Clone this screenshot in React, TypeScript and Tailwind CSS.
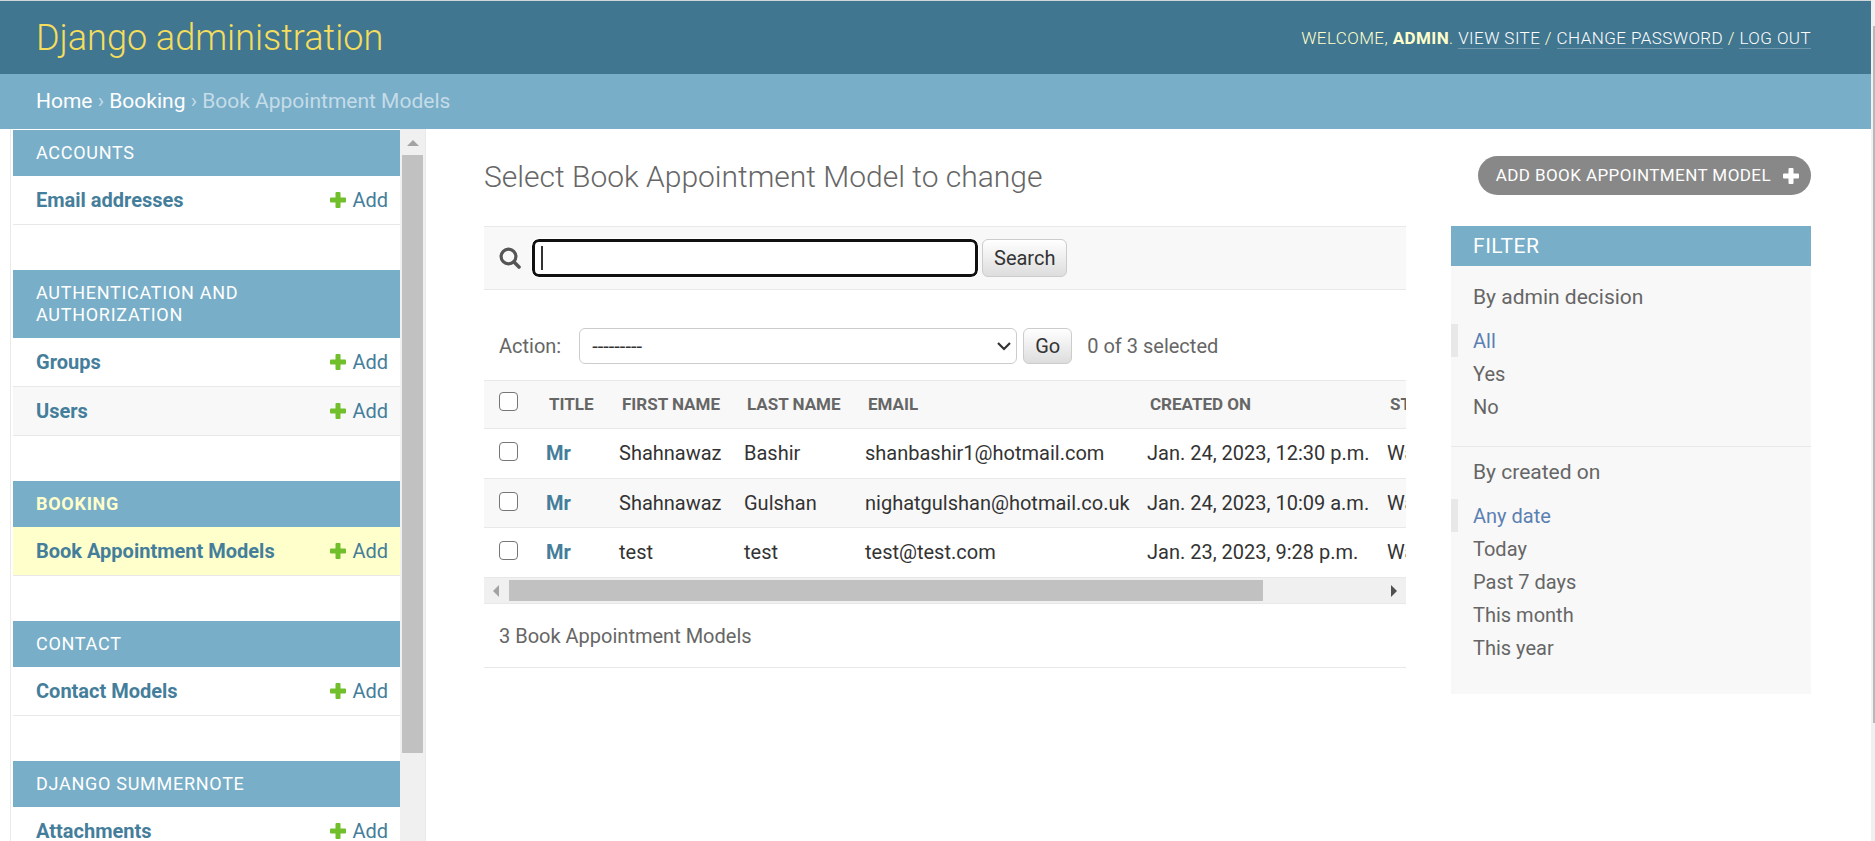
import React from "react";

type Section = { name: string; models: string[]; current?: boolean };

const sections: Section[] = [
  { name: "Accounts", models: ["Email addresses"] },
  { name: "Authentication and Authorization", models: ["Groups", "Users"] },
  { name: "Booking", models: ["Book Appointment Models"], current: true },
  { name: "Contact", models: ["Contact Models"] },
  { name: "Django Summernote", models: ["Attachments"] },
];

const columns = ["Title", "First name", "Last name", "Email", "Created on", "Status"];

const rows = [
  ["Mr", "Shahnawaz", "Bashir", "shanbashir1@hotmail.com", "Jan. 24, 2023, 12:30 p.m.", "Waiting"],
  ["Mr", "Shahnawaz", "Gulshan", "nighatgulshan@hotmail.co.uk", "Jan. 24, 2023, 10:09 a.m.", "Waiting"],
  ["Mr", "test", "test", "test@test.com", "Jan. 23, 2023, 9:28 p.m.", "Waiting"],
];

const filters = [
  { title: "By admin decision", options: ["All", "Yes", "No"] },
  { title: "By created on", options: ["Any date", "Today", "Past 7 days", "This month", "This year"] },
];

function Plus({ className }: { className: string }) {
  return (
    <svg viewBox="0 0 16 16" className={className} fill="currentColor" aria-hidden="true">
      <path d="M6.500 0h3q1 0 1 1v4.500H15q1 0 1 1v3q0 1-1 1h-4.500V15q0 1-1 1h-3q-1 0-1-1v-4.500H1q-1 0-1-1v-3q0-1 1-1h4.500V1q0-1 1-1z" />
    </svg>
  );
}

function Check({ label }: { label: string }) {
  return (
    <input
      type="checkbox"
      aria-label={label}
      className="block size-[19px] appearance-none rounded-[4px] border border-[#767676] bg-white"
    />
  );
}

function Sidebar() {
  return (
    <nav aria-label="Applications" className="ml-2.5 flex w-[416px] shrink-0 overflow-hidden border-x border-[#eaeaea]">
      <div className="h-0 min-h-full min-w-0 flex-1 pt-px pl-0.5">
        {sections.map((s) => (
          <section key={s.name} className="mb-[45px]">
            <h2 className="bg-[#79aec8] py-3 pr-20 pl-[23px] text-[18px] leading-[22px] tracking-[0.04em] uppercase">
              <a href="#" className={s.current ? "font-bold text-[#ffc]" : "text-white"}>
                {s.name}
              </a>
            </h2>
            {s.models.map((m, i) => (
              <div
                key={m}
                className={`flex h-[49px] items-center justify-between border-b border-[#e8e8e8] pr-3 pl-[23px] text-[20px] text-[#447e9b] ${
                  s.current ? "bg-[#ffc]" : i % 2 ? "bg-[#f8f8f8]" : "bg-white"
                }`}
              >
                <a href="#" className="font-bold">
                  {m}
                </a>
                <a href="#" className="flex items-center gap-1.5">
                  <Plus className="size-4 text-[#70bf2b]" />
                  Add
                </a>
              </div>
            ))}
          </section>
        ))}
      </div>
      <div className="flex w-[25px] shrink-0 flex-col items-center bg-[#f0f0f0]" aria-hidden="true">
        <svg viewBox="0 0 12 6" className="mt-[11px] mb-[9px] h-1.5 w-3 shrink-0" fill="#a3a3a3">
          <path d="M6 0l6 6H0z" />
        </svg>
        <div className="h-[598px] w-[21px] bg-[#c1c1c1]" />
      </div>
    </nav>
  );
}

function ResultTable() {
  return (
    <div>
      <div className="overflow-hidden">
        <table className="w-[1066px] table-fixed border-collapse text-left text-[20px] text-[#333]">
          <colgroup>
            <col className="w-[50px]" />
            <col className="w-[73px]" />
            <col className="w-[125px]" />
            <col className="w-[121px]" />
            <col className="w-[282px]" />
            <col className="w-[240px]" />
            <col />
          </colgroup>
          <thead>
            <tr className="h-12 border-y border-[#e8e8e8] bg-[#f8f8f8] text-[17px] text-[#666] uppercase">
              <th className="pb-1.5 pl-[15px]">
                <Check label="Select all" />
              </th>
              {columns.map((c) => (
                <th key={c} className="pl-[15px] font-bold whitespace-nowrap">
                  {c}
                </th>
              ))}
            </tr>
          </thead>
          <tbody>
            {rows.map((r, i) => (
              <tr key={i} className={`border-b border-[#e8e8e8] ${i % 2 ? "h-[49px] bg-[#f8f8f8]" : "h-[50px] bg-white"}`}>
                <td className="pb-1 pl-[15px]">
                  <Check label={`Select row ${i + 1}`} />
                </td>
                {r.map((v, j) => (
                  <td key={j} className="pb-px pl-3 whitespace-nowrap">
                    {j === 0 ? (
                      <a href="#" className="font-bold text-[#447e9b]">
                        {v}
                      </a>
                    ) : (
                      v
                    )}
                  </td>
                ))}
              </tr>
            ))}
          </tbody>
        </table>
      </div>
      <div className="flex h-[25px] items-center bg-[#f0f0f0] px-[9px]" aria-hidden="true">
        <svg viewBox="0 0 6 12" className="h-3 w-1.5 shrink-0" fill="#a3a3a3">
          <path d="M6 0v12L0 6z" />
        </svg>
        <div className="mx-2.5 flex-1">
          <div className="h-[21px] w-[86.5%] bg-[#c1c1c1]" />
        </div>
        <svg viewBox="0 0 6 12" className="h-3 w-1.5 shrink-0" fill="#505050">
          <path d="M0 0v12l6-6z" />
        </svg>
      </div>
    </div>
  );
}

const buttonClass =
  "rounded-[6px] border border-[#ccc] bg-linear-to-b from-white to-[#ddd] px-[11px] text-[20px] text-[#333]";

function ChangeList() {
  return (
    <div className="min-w-0 flex-1">
      <form className="flex h-16 items-center border-y border-[#e8e8e8] bg-[#f8f8f8] pb-px pl-[15px]" onSubmit={(e) => e.preventDefault()}>
        <label htmlFor="searchbar" className="mr-[11px]">
          <svg viewBox="0 0 22 22" className="size-[22px]" fill="none" stroke="#555" role="img" aria-label="Search">
            <circle cx="9.500" cy="9.500" r="7.400" strokeWidth="3.200" />
            <path d="M15 15l5 5" strokeWidth="3.600" strokeLinecap="round" />
          </svg>
        </label>
        <div className="relative mr-1">
          <input
            id="searchbar"
            type="text"
            className="block h-[38px] w-[446px] rounded-[7px] border-[3px] border-[#101010] bg-white px-2 text-[20px] outline-1 outline-white"
          />
          <span className="absolute top-[7px] left-[9px] h-6 w-[2px] bg-[#333]" aria-hidden="true" />
        </div>
        <button className={`h-[38px] ${buttonClass}`}>Search</button>
      </form>

      <form className="mt-[38px] mb-4 flex items-center pl-[15px] text-[20px] text-[#666]" onSubmit={(e) => e.preventDefault()}>
        <label htmlFor="action" className="mr-[18px]">
          Action:
        </label>
        <div className="relative mr-1.5">
          <select
            id="action"
            className="block h-9 w-[438px] appearance-none rounded-[6px] border border-[#ccc] bg-white px-3 text-[20px] text-[#333]"
          >
            <option>---------</option>
          </select>
          <svg
            viewBox="0 0 14 9"
            className="pointer-events-none absolute top-3.5 right-1.5 h-[9px] w-3.5"
            fill="none"
            stroke="#333"
            strokeWidth="2.200"
            aria-hidden="true"
          >
            <path d="M1 1l6 6 6-6" />
          </svg>
        </div>
        <button className={`mr-[15px] h-9 ${buttonClass}`}>Go</button>
        <span>0 of 3 selected</span>
      </form>

      <ResultTable />
      <p className="flex h-[65px] items-center border-y border-[#e8e8e8] px-[15px] text-[20px] text-[#666]">
        3 Book Appointment Models
      </p>
    </div>
  );
}

function Filter() {
  return (
    <aside className="w-[360px] shrink-0 self-start bg-[#f8f8f8]">
      <h2 className="flex h-10 items-center bg-[#79aec8] pt-0.5 pl-[22px] text-[21px] tracking-wide text-white uppercase">Filter</h2>
      {filters.map((f, i) => (
        <section key={f.title} className={i === 0 ? "border-b border-[#e8e8e8] pt-[19px] pb-[23px]" : "pt-[13px] pb-[30px]"}>
          <h3 className="mb-[14px] pl-[22px] text-[21px] leading-[25px] text-[#666]">{f.title}</h3>
          <ul>
            {f.options.map((o, j) => (
              <li key={o} className={`flex h-[33px] items-center ${j === 0 ? "border-l-[7px] border-[#e8e8e8] pl-[15px]" : "pl-[22px]"}`}>
                <a href="#" className={`text-[20px] ${j === 0 ? "text-[#5b80b2]" : "text-[#666]"}`}>
                  {o}
                </a>
              </li>
            ))}
          </ul>
        </section>
      ))}
    </aside>
  );
}

export default function App() {
  const link = "border-b border-white/25 text-white";
  return (
    <div className="flex h-screen overflow-hidden bg-white font-['Roboto',sans-serif]">
      <div className="flex min-w-0 flex-1 flex-col">
        <header className="flex h-[74px] shrink-0 items-center justify-between border-t border-[#d0d7da] bg-[#417690] pr-[60px] pl-9 text-[#ffc]">
          <h1 className="text-[36px] font-light text-[#f5dd5d]">
            <a href="#">Django administration</a>
          </h1>
          <div className="text-[17px] leading-5 font-light tracking-wide uppercase">
            Welcome, <strong className="font-bold">admin</strong>.{" "}
            <a href="#" className={link}>View site</a> / <a href="#" className={link}>Change password</a> /{" "}
            <a href="#" className={link}>Log out</a>
          </div>
        </header>
        <div className="flex h-[55px] shrink-0 items-center bg-[#79aec8] pt-px pl-9 text-[21px] text-[#c4dce8]">
          <p>
            <a href="#" className="text-white">Home</a> ›{" "}
            <a href="#" className="text-white">Booking</a> › Book Appointment Models
          </p>
        </div>
        <div className="flex min-h-0 flex-1">
          <Sidebar />
          <main className="min-w-0 flex-1 pt-[27px] pr-[60px] pl-[58px]">
            <div className="mb-[31px] flex items-center justify-between">
              <h1 className="pt-0.5 text-[30px] leading-9 font-light text-[#666]">Select Book Appointment Model to change</h1>
              <a
                href="#"
                className="flex h-[39px] items-center gap-3 rounded-full bg-[#888] pr-3 pl-[18px] text-[17px] tracking-wide text-white uppercase"
              >
                Add Book Appointment Model
                <Plus className="size-4" />
              </a>
            </div>
            <div className="flex gap-[45px]">
              <ChangeList />
              <Filter />
            </div>
          </main>
        </div>
      </div>
      <div className="w-1 shrink-0 bg-[#f0f0f0] pt-[26px] pl-0.5" aria-hidden="true">
        <div className="h-[85.5%] bg-[#b8b8b8]" />
      </div>
    </div>
  );
}
